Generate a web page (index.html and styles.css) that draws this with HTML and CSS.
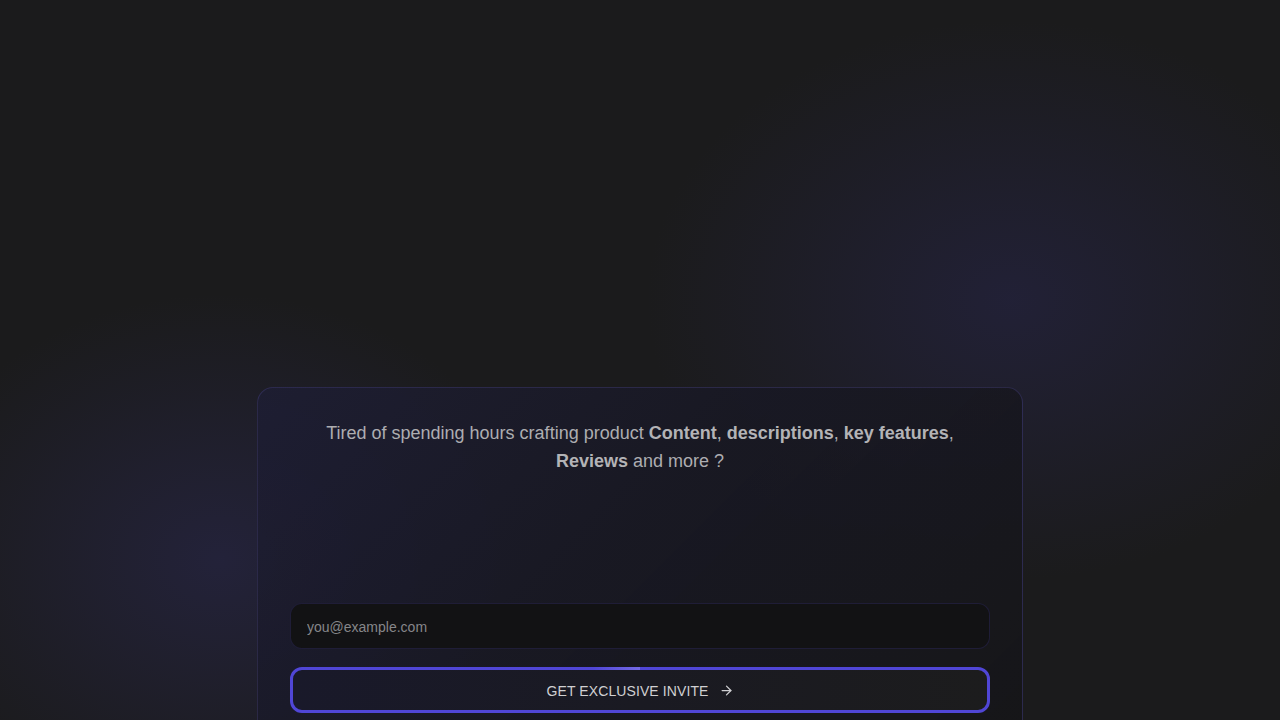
FILE: index.html
```html
<!DOCTYPE html>
<html lang="en">
<head>
<meta charset="utf-8">
<title>Exclusive Invite</title>
<link rel="stylesheet" href="styles.css">
</head>
<body>
<main class="page">
  <section class="card">
    <p class="lead">Tired of spending hours crafting product <strong>Content</strong>, <strong>descriptions</strong>, <strong>key features</strong>, <strong>Reviews</strong> and more ?</p>
    <div class="spacer"></div>
    <form class="form">
      <input class="email" type="email" placeholder="you@example.com">
      <button class="cta" type="button">
        <span>GET EXCLUSIVE INVITE</span>
        <svg width="15" height="15" viewBox="0 0 24 24" fill="none" stroke="currentColor" stroke-width="2" stroke-linecap="round" stroke-linejoin="round"><path d="M5 12h14"/><path d="M12 5l7 7-7 7"/></svg>
      </button>
    </form>
  </section>
</main>
</body>
</html>
```
FILE: styles.css
```css
* { box-sizing: border-box; }
html, body { margin: 0; height: 100%; }
body {
  background-color: #1b1b1c;
  background-image:
    radial-gradient(ellipse 460px 380px at 220px 560px, rgba(42, 40, 82, 0.55), rgba(42, 40, 82, 0) 70%),
    radial-gradient(ellipse 520px 400px at 1010px 300px, rgba(40, 38, 80, 0.5), rgba(40, 38, 80, 0) 70%);
  font-family: "Liberation Sans", Arial, sans-serif;
  overflow: hidden;
}
.page {
  display: flex;
  justify-content: center;
  padding-top: 387px;
}
.card {
  width: 766px;
  border: 1px solid rgba(72, 68, 135, 0.4);
  border-radius: 16px;
  padding: 31px 32px 40px;
  background: linear-gradient(135deg, rgba(30, 30, 52, 0.85) 0%, rgba(24, 24, 36, 0.85) 45%, rgba(22, 22, 24, 0.9) 100%);
}
.lead {
  margin: 0;
  text-align: center;
  font-size: 18px;
  line-height: 28px;
  color: #adadb1;
  padding: 0 4px;
}
.lead strong { font-weight: 700; color: #b3b3b6; }
.spacer { height: 128px; }
.form {
  display: flex;
  flex-direction: column;
  gap: 18px;
}
.email {
  flex-shrink: 0;
  height: 46px;
  border-radius: 12px;
  border: 1px solid rgba(70, 64, 160, 0.25);
  background: #121214;
  padding: 1px 16px 0;
  font-family: "Liberation Sans", Arial, sans-serif;
  font-size: 14px;
  color: #ddd;
  outline: none;
}
.email::placeholder { color: #86868a; }
.cta {
  flex-shrink: 0;
  position: relative;
  height: 46px;
  border-radius: 12px;
  border: 3px solid #5046d6;
  background: linear-gradient(90deg, #19192a 0%, #1a1a22 50%, #1c1c1d 100%);
  color: #d0d0d2;
  font-family: "Liberation Sans", Arial, sans-serif;
  font-size: 14px;
  letter-spacing: 0.1px;
  display: flex;
  align-items: center;
  justify-content: center;
  gap: 10px;
  padding: 1px 0 0;
}
.cta::before {
  content: "";
  position: absolute;
  top: -3px;
  left: 300px;
  width: 47px;
  height: 3px;
  background: linear-gradient(90deg, rgba(140, 130, 240, 0), rgba(140, 130, 240, 0.6));
}
.cta svg { color: #cfcfd2; }
```
